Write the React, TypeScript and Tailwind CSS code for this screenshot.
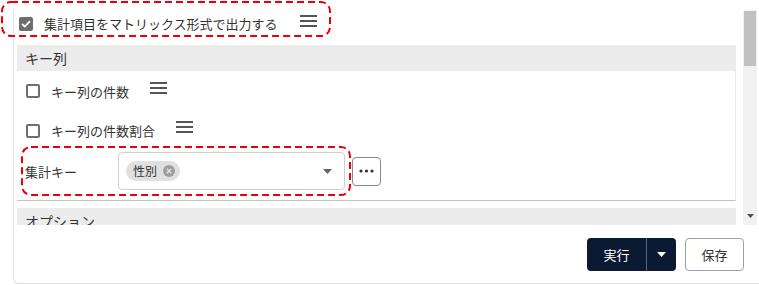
import React from "react";

function Hamburger() {
  return (
    <svg width="17" height="12" viewBox="0 0 17 12" className="shrink-0">
      <rect x="0" y="0" width="17" height="2" fill="#555" />
      <rect x="0" y="5" width="17" height="2" fill="#555" />
      <rect x="0" y="10" width="17" height="2" fill="#555" />
    </svg>
  );
}

function Checkbox({ checked }: { checked?: boolean }) {
  if (checked) {
    return (
      <div className="flex h-[14px] w-[14px] shrink-0 items-center justify-center rounded-[2px] bg-[#6e6e6e]">
        <svg width="10" height="8" viewBox="0 0 10 8">
          <path d="M1 4 L3.8 6.6 L9 1.2" fill="none" stroke="#fff" strokeWidth="1.8" />
        </svg>
      </div>
    );
  }
  return <div className="h-[14px] w-[14px] shrink-0 rounded-[2px] border-2 border-[#6e6e6e] bg-white" />;
}

function SectionHeader({ label }: { label: string }) {
  return (
    <div className="flex h-[26px] items-center bg-[#ececec] pl-[8px] text-[14px] text-[#333]">
      {label}
    </div>
  );
}

// red dashed annotation frame
function DashedFrame({ className, w, h }: { className: string; w: number; h: number }) {
  return (
    <svg width={w} height={h} className={`pointer-events-none absolute ${className}`}>
      <rect
        x="1"
        y="1"
        width={w - 2}
        height={h - 2}
        rx="9"
        fill="none"
        stroke="#e8000b"
        strokeWidth="2"
        strokeDasharray="7 4"
      />
    </svg>
  );
}

export default function App() {
  return (
    <div className="relative h-[285px] w-[759px] overflow-hidden bg-white font-['Noto_Sans_CJK_JP','Noto_Sans',sans-serif] text-[13px] text-[#333]">
      <div className="ml-[13px] mt-[10px] flex h-[274px] flex-col rounded-bl-md border-b border-l border-[#e2e2e2]">
        <div className="flex h-[215px]">
          <div className="flex-1 overflow-hidden pl-[3px] pr-[7px]">
            {/* top option */}
            <div className="flex h-[27px] items-center pl-[2px]">
              <Checkbox checked />
              <span className="ml-[11px] leading-none">集計項目をマトリックス形式で出力する</span>
              <div className="mb-[6px] ml-[22px]">
                <Hamburger />
              </div>
            </div>

            {/* キー列 */}
            <div className="mt-[8px] border-b border-r border-b-[#c4c4c4] border-r-[#ececec]">
              <SectionHeader label="キー列" />
              <div className="pb-[8px] pl-[9px]">
                <div className="flex h-[40px] items-center">
                  <Checkbox />
                  <span className="ml-[11px] leading-none">キー列の件数</span>
                  <div className="mb-[6px] ml-[21px]">
                    <Hamburger />
                  </div>
                </div>
                <div className="flex h-[39px] items-center">
                  <Checkbox />
                  <span className="ml-[11px] leading-none">キー列の件数割合</span>
                  <div className="mb-[8px] ml-[21px]">
                    <Hamburger />
                  </div>
                </div>
                <div className="-ml-[1px] flex items-center py-[2px]">
                  <span className="w-[93px] leading-none">集計キー</span>
                  <div className="flex h-[38px] w-[227px] items-center rounded-[4px] border border-[#cfcfcf] pl-[7px] pr-[12px]">
                    <div className="flex h-[20px] items-center rounded-full bg-[#e0e0e0] pl-[7px] pr-[5px]">
                      <span className="text-[12px] leading-none">性別</span>
                      <svg width="12" height="12" viewBox="0 0 12 12" className="ml-[6px]">
                        <circle cx="6" cy="6" r="6" fill="#9e9e9e" />
                        <path d="M3.8 3.8 L8.2 8.2 M8.2 3.8 L3.8 8.2" stroke="#e0e0e0" strokeWidth="1.5" />
                      </svg>
                    </div>
                    <div className="flex-1" />
                    <svg width="9" height="5" viewBox="0 0 9 5">
                      <path d="M0 0 L9 0 L4.5 5 Z" fill="#666" />
                    </svg>
                  </div>
                  <div className="ml-[7px] flex h-[29px] w-[29px] items-center justify-center rounded-[4px] border border-[#8a8a8a]">
                    <svg width="15" height="4" viewBox="0 0 15 4">
                      <circle cx="2" cy="2" r="1.6" fill="#333" />
                      <circle cx="7.5" cy="2" r="1.6" fill="#333" />
                      <circle cx="13" cy="2" r="1.6" fill="#333" />
                    </svg>
                  </div>
                </div>
              </div>
            </div>

            {/* オプション */}
            <div className="mt-[7px]">
              <SectionHeader label="オプション" />
            </div>
          </div>

          {/* scrollbar */}
          <div className="mr-[2px] flex w-[14px] flex-col bg-[#f1f1f1]">
            <div className="mx-[1px] mt-[1px] h-[55px] bg-[#c1c1c1]" />
            <div className="flex-1" />
            <div className="flex h-[14px] items-start justify-center pt-[3px]">
              <svg width="7" height="4" viewBox="0 0 7 4">
                <path d="M0 0 L7 0 L3.5 4 Z" fill="#505050" />
              </svg>
            </div>
          </div>
        </div>

        {/* footer */}
        <div className="flex justify-end gap-[9px] pr-[15px] pt-[13px]">
          <div className="flex h-[33px] overflow-hidden rounded-[4px] bg-[#0b1a33] text-white">
            <div className="flex w-[59px] items-center justify-center text-[13px]">実行</div>
            <div className="w-px bg-[#5b6577]" />
            <div className="flex w-[29px] items-center justify-center">
              <svg width="9" height="5" viewBox="0 0 9 5">
                <path d="M0 0 L9 0 L4.5 5 Z" fill="#fff" />
              </svg>
            </div>
          </div>
          <div className="flex h-[33px] w-[59px] items-center justify-center rounded-[4px] border border-[#9aa2ad] text-[13px]">
            保存
          </div>
        </div>
      </div>

      <DashedFrame className="left-[1px] top-[1px]" w={330} h={36} />
      <DashedFrame className="left-[21px] top-[146px]" w={330} h={50} />
    </div>
  );
}
